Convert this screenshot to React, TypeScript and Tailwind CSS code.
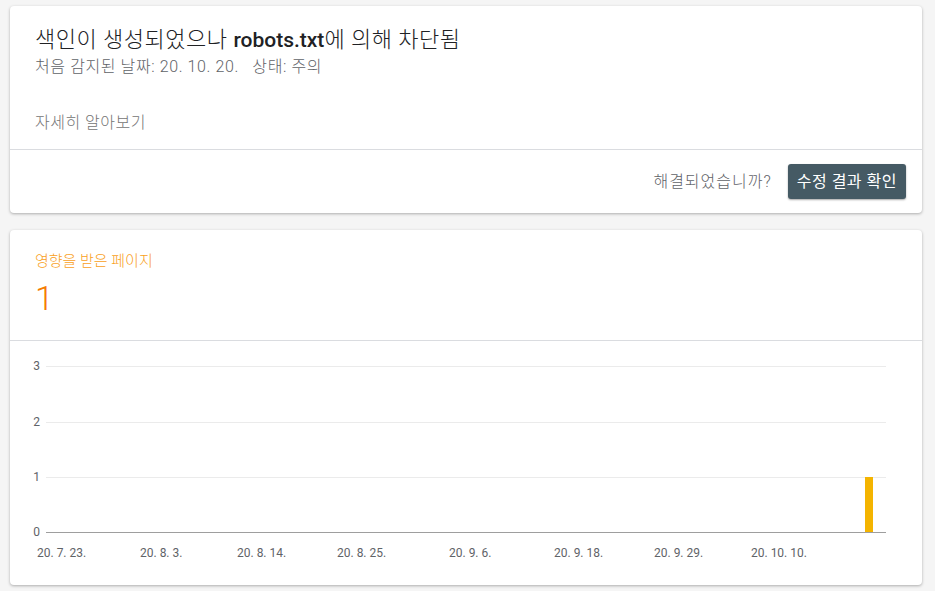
const font = { fontFamily: "Roboto, 'Noto Sans CJK KR', sans-serif" };

const yTicks = [
  { v: "3", y: 25 },
  { v: "2", y: 81 },
  { v: "1", y: 136 },
];

const xTicks = [
  { t: "20. 7. 23.", x: 27 },
  { t: "20. 8. 3.", x: 130 },
  { t: "20. 8. 14.", x: 227 },
  { t: "20. 8. 25.", x: 327 },
  { t: "20. 9. 6.", x: 439 },
  { t: "20. 9. 18.", x: 544 },
  { t: "20. 9. 29.", x: 644 },
  { t: "20. 10. 10.", x: 741 },
];

function Chart() {
  return (
    <svg width="912" height="244" viewBox="0 0 912 244" className="block">
      {yTicks.map((t) => (
        <g key={t.v}>
          <line x1="36" x2="876" y1={t.y + 0.5} y2={t.y + 0.5} stroke="#ebebeb" />
          <text x="30" y={t.y + 4} textAnchor="end" fontSize="12" fill="#5f6368" style={font}>
            {t.v}
          </text>
        </g>
      ))}
      <text x="30" y="195" textAnchor="end" fontSize="12" fill="#5f6368" style={font}>
        0
      </text>
      <rect x="855" y="136" width="8" height="55" fill="#f4b400" />
      <line x1="36" x2="876" y1="191.5" y2="191.5" stroke="#9e9e9e" />
      {xTicks.map((t) => (
        <text key={t.t} x={t.x} y="216" fontSize="12" fill="#5f6368" style={font}>
          {t.t}
        </text>
      ))}
    </svg>
  );
}

export default function App() {
  return (
    <div className="min-h-[591px] bg-[#f5f5f5] pt-[6px] pl-[10px] w-[935px]" style={font}>
      <div className="w-[912px] bg-white shadow-[0_1px_3px_rgba(0,0,0,0.3)] rounded-sm">
        <div className="px-[25px] pt-[19px] h-[143px]">
          <h1 className="text-[22px] leading-[30px] text-[#202124] font-light tracking-[0.5px]">
            색인이 생성되었으나 <span className="font-medium text-[21px] tracking-normal">robots.txt</span>에 의해 차단됨
          </h1>
          <p className="text-[16px] leading-[20px] text-[#5f6368] font-light mt-[2px] tracking-[0.6px]">
            처음 감지된 날짜: 20. 10. 20.&nbsp;&nbsp;&nbsp;상태: 주의
          </p>
          <p className="text-[16px] leading-[22px] text-[#757575] font-light mt-[35px] tracking-[0.5px]">
            자세히 알아보기
          </p>
        </div>
        <div className="border-t border-[#dadce0] h-[64px] flex items-center justify-end pr-[16px] gap-[16px]">
          <span className="text-[16px] text-[#5f6368] font-light tracking-[1px]">해결되었습니까?</span>
          <button className="h-[35px] px-[9px] bg-[#455a64] text-white text-[16px] tracking-[0.5px] rounded-[3px] shadow-[0_1px_2px_rgba(0,0,0,0.35)]">
            수정 결과 확인
          </button>
        </div>
      </div>

      <div className="w-[912px] mt-[17px] bg-white shadow-[0_1px_3px_rgba(0,0,0,0.3)] rounded-sm">
        <div className="px-[25px] pt-[20px] h-[110px]">
          <p className="text-[15px] leading-[22px] text-[#f9a01b] font-light">영향을 받은 페이지</p>
          <p className="text-[34px] leading-[40px] text-[#f57c00] font-light mt-[6px]">1</p>
        </div>
        <div className="border-t border-[#dadce0]">
          <Chart />
        </div>
      </div>
    </div>
  );
}
